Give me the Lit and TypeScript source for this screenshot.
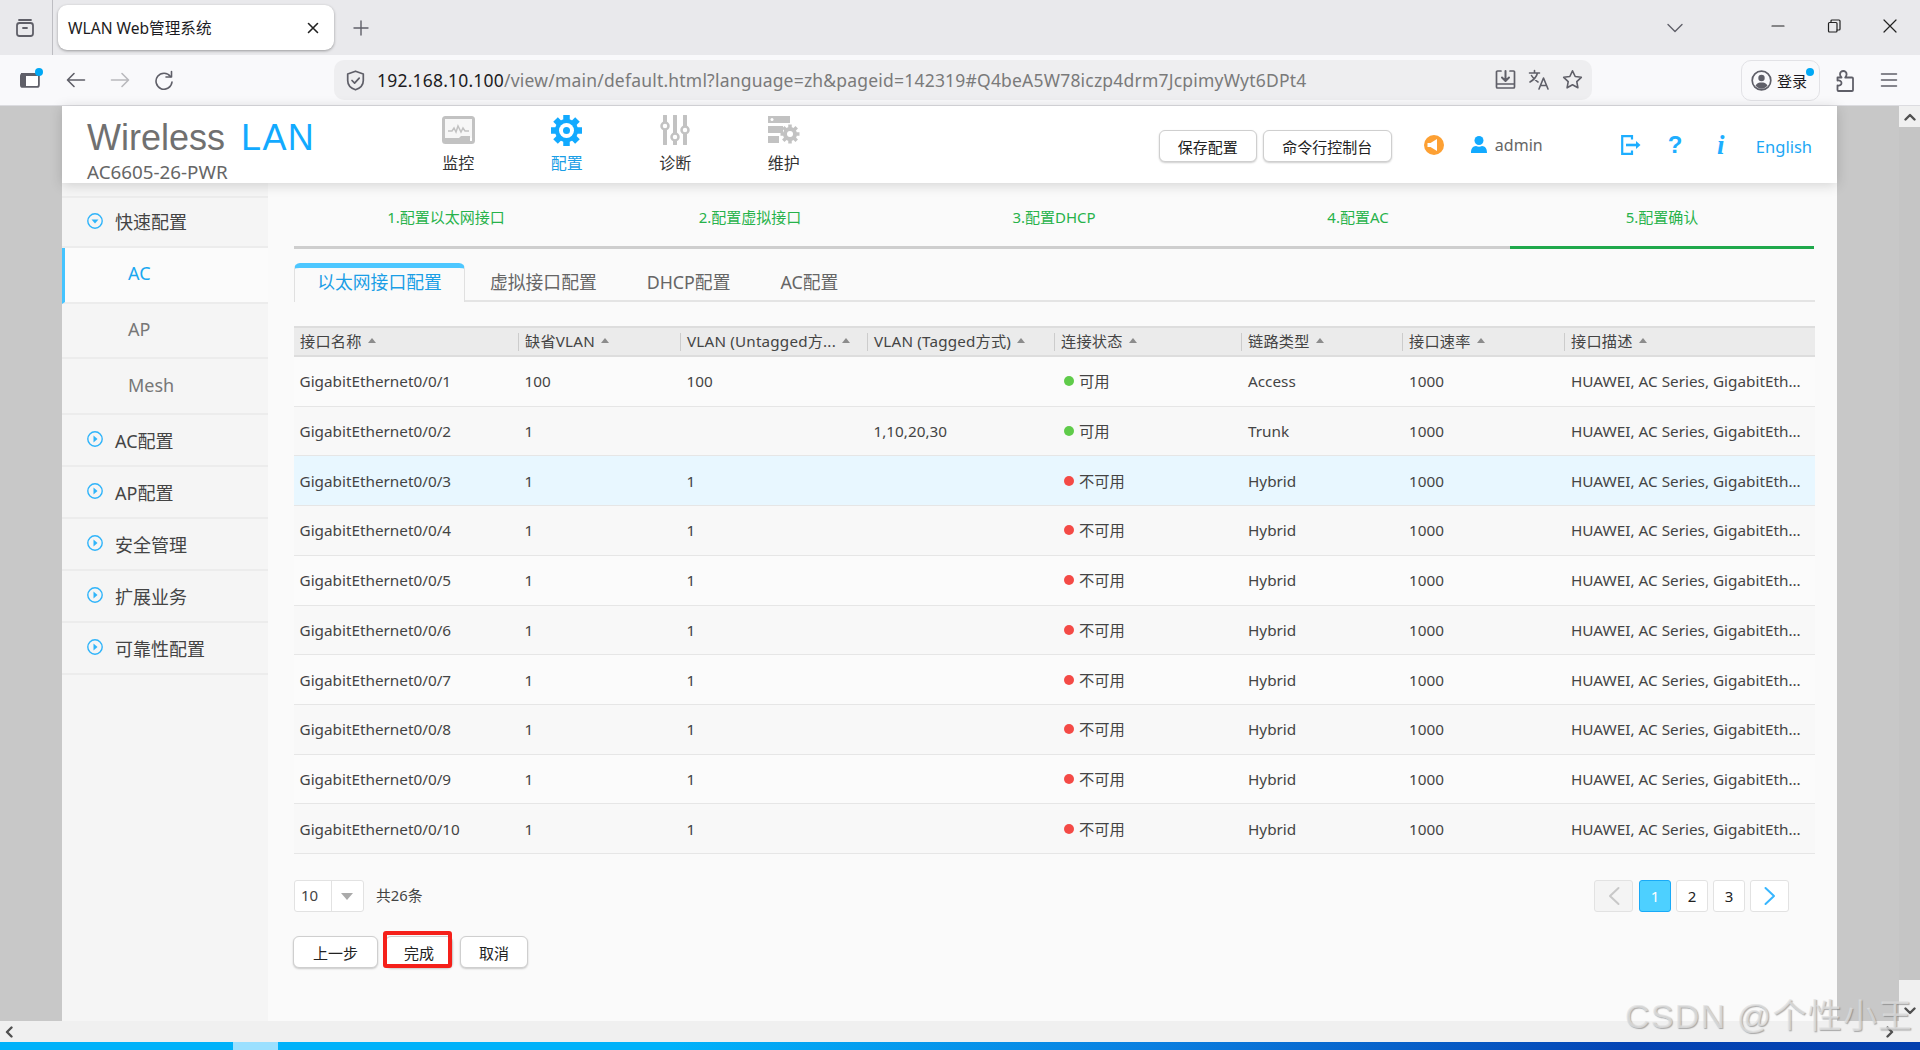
import { LitElement, html, css, svg } from "lit";
import { customElement } from "lit/decorators.js";

const stroke = (w: number, h: number, body: unknown, color = "#5f5f68", sw = 1.6) => html`<svg width=${w} height=${h} viewBox="0 0 ${w} ${h}" fill="none" stroke=${color} stroke-width=${sw} stroke-linecap="round" stroke-linejoin="round">${body}</svg>`;

const gearTeeth = (cx: number, cy: number, r: number, n: number) => {
  const out = [];
  for (let i = 0; i < n; i++) {
    const a = (i * 2 * Math.PI) / n;
    out.push(svg`<line x1=${cx} y1=${cy} x2=${cx + r * Math.cos(a)} y2=${cy + r * Math.sin(a)} />`);
  }
  return out;
};

type Row = { name: string; vlan: string; un: string; tag: string; up: boolean; link: string };
const rows: Row[] = [
  { name: "GigabitEthernet0/0/1", vlan: "100", un: "100", tag: "", up: true, link: "Access" },
  { name: "GigabitEthernet0/0/2", vlan: "1", un: "", tag: "1,10,20,30", up: true, link: "Trunk" },
  ...[3, 4, 5, 6, 7, 8, 9, 10].map((n) => ({ name: `GigabitEthernet0/0/${n}`, vlan: "1", un: "1", tag: "", up: false, link: "Hybrid" })),
];
const heads = ["接口名称", "缺省VLAN", "VLAN (Untagged方...", "VLAN (Tagged方式)", "连接状态", "链路类型", "接口速率", "接口描述"];
const sideTop = ["AC配置", "AP配置", "安全管理", "扩展业务", "可靠性配置"];
const steps = ["1.配置以太网接口", "2.配置虚拟接口", "3.配置DHCP", "4.配置AC", "5.配置确认"];

@customElement("app-root")
export class AppRoot extends LitElement {
  static styles = css`
    :host { display: flex; flex-direction: column; position: relative; width: 1920px; height: 1050px; overflow: hidden; font-family: "Noto Sans", "Noto Sans CJK SC", sans-serif; color: #444; font-size: 15px; }
    svg { display: block; flex: none; }
    .tabbar { height: 55px; flex: none; background: #e9e9ec; display: flex; align-items: center; }
    .groupslot { width: 53px; height: 55px; border-right: 1px solid #bdbdc2; display: flex; align-items: center; padding-left: 15px; box-sizing: border-box; }
    .tab { margin-left: 5px; width: 276px; height: 45px; background: #fff; border-radius: 9px; box-shadow: 0 1px 3px rgba(0,0,0,.35); display: flex; align-items: center; justify-content: space-between; padding: 0 15px 0 10px; box-sizing: border-box; font-size: 15.6px; color: #1c1b22; }
    .plus { margin-left: 19px; }
    .chev { margin-left: 1298px; }
    .winbtns { margin-left: 88px; display: flex; gap: 42px; align-items: center; padding-bottom: 4px; }
    .toolbar { height: 50px; flex: none; background: #f9f9fb; border-bottom: 1px solid #dcdce0; display: flex; align-items: center; }
    .navbtns { width: 334px; padding-left: 20px; box-sizing: border-box; display: flex; align-items: center; }
    .navbtns svg + svg { margin-left: 24px; }
    .navgap { width: 26px; flex: none; }
    .addr { width: 1258px; height: 40px; background: #eeeef0; border-radius: 10px; display: flex; align-items: center; padding: 0 9px 0 12px; box-sizing: border-box; }
    .url { margin-left: 12px; flex: 1; font-size: 17.5px; letter-spacing: .2px; color: #7a7a7a; white-space: nowrap; overflow: hidden; }
    .url b { font-weight: 400; color: #1c1b22; }
    .addr-ic { display: flex; gap: 12px; }
    .login { margin-left: 149px; position: relative; width: 79px; height: 41px; box-sizing: border-box; border: 1px solid #e2e2e6; border-radius: 10px; display: flex; align-items: center; padding-left: 9px; gap: 5px; font-size: 15px; color: #1c1b22; }
    .dot { position: absolute; width: 8px; height: 8px; border-radius: 50%; background: #00a8f5; }
    .login .dot { right: 5px; top: 7px; }
    .sideslot .dot { right: -3px; top: -4px; }
    .sideslot { position: relative; }
    .puz { margin-left: 15px; }
    .ham { margin-left: 25px; }
    .page { flex: 1; display: flex; min-height: 0; }
    .mask { background: #c8c8c8; width: 62px; flex: none; }
    .vs { width: 21px; flex: none; background: #c5c5c5; display: flex; flex-direction: column; justify-content: space-between; }
    .vb { height: 21px; background: #f0f0f0; display: flex; align-items: center; justify-content: center; }
    .vb.low { height: 41px; align-items: flex-end; padding-bottom: 6px; box-sizing: border-box; }
    .app { width: 1775px; flex: none; display: flex; flex-direction: column; background: #fafafa; }
    .hd { height: 77px; flex: none; background: #fff; box-shadow: 0 2px 12px rgba(0,0,0,.16); position: relative; z-index: 2; display: flex; align-items: center; }
    .logo { width: 342px; box-sizing: border-box; padding-left: 25px; flex: none; align-self: flex-start; }
    .wl { font-family: "Liberation Sans", sans-serif; font-size: 36px; line-height: 36px; color: #707070; white-space: nowrap; margin-top: 14px; }
    .wl span { color: #12aaff; margin-left: 16px; letter-spacing: 1.4px; }
    .model { font-size: 18.8px; line-height: 22px; color: #666; margin-top: 5px; white-space: nowrap; }
    .nav { display: flex; flex: none; align-self: flex-start; }
    .ni { width: 108.5px; display: flex; flex-direction: column; align-items: center; font-size: 16px; line-height: 20px; color: #333; gap: 7px; padding-top: 8px; }
    .ni .ic { height: 32px; display: flex; align-items: center; justify-content: center; }
    .ni.on { color: #1a9ee6; }
    .btn { box-sizing: border-box; height: 32px; background: #fff; border: 1px solid #cfcfcf; border-radius: 6px; box-shadow: 0 1px 2px rgba(0,0,0,.2); font-size: 15px; color: #222; display: flex; align-items: center; justify-content: center; flex: none; }
    .btn.save { width: 98px; }
    .btn.cmd { width: 129px; margin-left: 6px; }
    .btn.prev { width: 85px; }
    .btn.act { width: 68px; }
    .hr { flex: 1; justify-content: flex-end; padding: 3px 25px 0 0; display: flex; align-items: center; }
    .h-ic { margin-top: -3px; }
    .h-ic.a { margin-left: 32px; }
    .h-ic.b { margin-left: 27px; }
    .h-ic.c { margin-left: 58px; }
    .admin { font-size: 16px; color: #666; margin-left: 8px; width: 61px; margin-top: -3px; }
    .q, .i { color: #1eaeff; font-weight: 700; line-height: 24px; flex: none; margin-top: -3px; }
    .q { font-family: "Liberation Sans", sans-serif; font-size: 24px; margin-left: 27px; width: 13px; text-align: center; }
    .i { font-family: "Liberation Serif", serif; font-style: italic; font-size: 27px; margin-left: 34px; width: 12px; text-align: center; }
    .en { font-size: 16.5px; color: #1ca7f5; margin-left: 29px; flex: none; }
    .body { flex: 1; display: flex; min-height: 0; }
    .side { width: 206px; flex: none; background: #f5f5f5; padding-top: 13px; box-sizing: border-box; }
    .sec { height: 52px; box-sizing: border-box; border-bottom: 2px solid #ececec; display: flex; align-items: center; padding-left: 25px; gap: 12px; font-size: 18px; color: #444; }
    .sec svg { margin-top: -2px; }
    .sec.top { border-top: 2px solid #ececec; padding-bottom: 2px; }
    .sec.top svg { margin-top: 0; }
    .sub { height: 55.7px; box-sizing: border-box; border-bottom: 2px solid #ececec; display: flex; align-items: center; padding: 0 0 3px 66px; font-size: 18px; color: #777; }
    .sub.on { background: #fbfbfb; color: #1aa7f0; border-left: 3px solid #44c4ff; padding-left: 63px; }
    .main { flex: 1; padding: 0 22px 0 26px; min-width: 0; }
    .steps { display: grid; grid-template-columns: repeat(5, 1fr); height: 66px; margin-right: 1px; }
    .st { box-sizing: border-box; border-bottom: 3px solid #cecece; color: #27b24a; font-size: 15px; line-height: 20px; padding-top: 24px; text-align: center; }
    .st.on { border-bottom-color: #1fa84b; }
    .tabs { margin-top: 14px; height: 39px; display: flex; box-sizing: border-box; border-bottom: 2px solid #e4e4e4; }
    .t { padding: 6px 25px 0; font-size: 17.8px; line-height: 26px; color: #666; white-space: nowrap; }
    .t.on { box-sizing: border-box; width: 171px; height: 39px; padding: 1px 0 0; text-align: center; background: #fafafa; color: #1a9ee6; border: 1px solid #e0e0e0; border-bottom: none; border-top: 5px solid #4dc7ff; border-radius: 6px 6px 0 0; }
    .tbl { margin-top: 24px; }
    .gr { display: grid; grid-template-columns: 224px 162px 187px 187px 187px 161px 162px 1fr; }
    .th { height: 31px; box-sizing: border-box; background: #ebebeb; border-top: 2px solid #ddd; border-bottom: 2px solid #ddd; align-items: center; }
    .hc { padding: 0 0 2px 6px; box-sizing: border-box; height: 18px; line-height: 16px; font-size: 15.2px; letter-spacing: .2px; color: #444; border-left: 1px solid #ccc; display: flex; align-items: center; gap: 6px; white-space: nowrap; }
    .hc:first-child { border-left: none; }
    .tri { width: 0; height: 0; border-left: 4.5px solid transparent; border-right: 4.5px solid transparent; border-bottom: 5px solid #8c8c8c; flex: none; }
    .rows { display: grid; grid-template-rows: repeat(10, 1fr); height: 497px; }
    .r { align-items: center; border-bottom: 1px solid #e6e6e6; background: #f8f8f8; }
    .r.odd { background: #fbfbfb; }
    .r.hl { background: #e8f7ff; }
    .c { padding-left: 6.5px; color: #444; white-space: nowrap; font-size: 15.3px; line-height: 20px; }
    .c:first-child { padding-left: 5.5px; }
    .c:nth-child(n+6) { padding-left: 7px; }
    .s { display: flex; align-items: center; gap: 5px; padding-left: 10px; }
    .sd { width: 10px; height: 10px; border-radius: 50%; background: #f44a46; flex: none; }
    .sd.up { background: #5fcb4a; }
    .pg { margin-top: 26px; height: 32px; display: flex; align-items: center; }
    .sel { width: 70px; height: 32px; box-sizing: border-box; background: #fff; border: 1px solid #e2e2e2; border-radius: 3px; display: flex; align-items: center; font-size: 15px; }
    .sel span { width: 37px; padding-left: 6px; box-sizing: border-box; border-right: 1px solid #e2e2e2; height: 30px; line-height: 28px; }
    .down { margin-left: 9px; width: 0; height: 0; border-left: 6px solid transparent; border-right: 6px solid transparent; border-top: 7px solid #aaa; }
    .total { margin: -4px 0 0 12px; font-size: 14.8px; color: #444; }
    .pager { margin-left: auto; margin-right: 26px; display: flex; gap: 5px; }
    .p { box-sizing: border-box; width: 32px; height: 32px; background: #fff; border: 1px solid #e2e2e2; border-radius: 3px; display: flex; align-items: center; justify-content: center; font-size: 15px; color: #222; }
    .p.wide { width: 39px; }
    .p.off { background: #f4f4f4; margin-right: 1px; }
    .p.on { background: #4dd0ff; border-color: #19aaf8; color: #fff; }
    .acts { margin-top: 24px; display: flex; gap: 7px; position: relative; margin-left: -1px; }
    .redbox { position: absolute; left: 90px; top: -5px; width: 69px; height: 37px; box-sizing: border-box; border: 4px solid #f5201a; border-radius: 3px; }
    .hs { height: 21px; flex: none; background: #f0f0f0; display: flex; align-items: center; justify-content: space-between; padding: 0 26px 0 5px; }
    .task { height: 8px; flex: none; background: linear-gradient(90deg, #00b2fa 0, #00b2fa 35%, #0a7fe0 60%, #0444b4 85%, #0340ae 100%); display: flex; }
    .task i { margin-left: 233px; width: 45px; background: #9be0ff; }
    .wm { position: absolute; left: 1625px; top: 994px; font-family: "Liberation Sans", "Noto Sans CJK SC", sans-serif; font-size: 34px; letter-spacing: 1.2px; line-height: 44px; color: rgba(225,225,225,.75); text-shadow: 1px 1px 1px rgba(110,110,110,.55); white-space: nowrap; z-index: 5; }
  `;

  render() {
    return html`
      <div class="tabbar">
        <div class="groupslot">${stroke(20, 20, svg`<rect x="2" y="5" width="16" height="13" rx="2.5"/><path d="M4 2h12M8 10h4"/>`, "#5f5f68", 1.8)}</div>
        <div class="tab">WLAN Web管理系统${stroke(12, 12, svg`<path d="M1.5 1.5l9 9M10.5 1.5l-9 9"/>`, "#222", 1.6)}</div>
        <div class="plus">${stroke(16, 16, svg`<path d="M8 1v14M1 8h14"/>`, "#5f5f68", 1.4)}</div>
        <div class="chev">${stroke(16, 10, svg`<path d="M1 1.5l7 7 7-7"/>`, "#5f5f68", 1.4)}</div>
        <div class="winbtns">
          ${stroke(14, 14, svg`<path d="M1 7h12"/>`, "#222", 1.2)}
          ${stroke(14, 14, svg`<rect x="1.5" y="3.5" width="8.5" height="9.5" rx="1"/><path d="M4 3.5V2a1 1 0 0 1 1-1h7a1 1 0 0 1 1 1v8a1 1 0 0 1-1 1h-2"/>`, "#222", 1.2)}
          ${stroke(14, 14, svg`<path d="M1 1l12 12M13 1L1 13"/>`, "#222", 1.2)}
        </div>
      </div>
      <div class="toolbar">
        <div class="navbtns">
          <div class="sideslot">
            ${html`<svg width="20" height="16" viewBox="0 0 20 16"><rect x="0.9" y="1.9" width="18" height="13" rx="2" fill="#fff" stroke="#5f5f68" stroke-width="1.8"/><path d="M1 3a2 2 0 0 1 2-2h3v14H3a2 2 0 0 1-2-2z" fill="#5f5f68"/><path d="M1 1h18v3H1z" fill="#5f5f68"/></svg>`}
            <span class="dot"></span>
          </div>
          <div class="navgap"></div>
          ${stroke(20, 16, svg`<path d="M18.5 8H2M8 1.5L1.5 8 8 14.5"/>`, "#5f5f68", 1.6)}
          ${stroke(20, 16, svg`<path d="M1.5 8H18M12 1.5L18.5 8 12 14.5"/>`, "#b9b9bd", 1.6)}
          ${stroke(20, 20, svg`<path d="M16.5 6.5A8 8 0 1 0 18 12"/><path d="M17.5 1.5v5.5h-5.5"/>`, "#5f5f68", 1.6)}
        </div>
        <div class="addr">
          ${stroke(19, 21, svg`<path d="M9.5 1.2l7.8 2.8v6.5c0 4.6-3.3 7.8-7.8 9.3-4.5-1.5-7.8-4.7-7.8-9.3V4z"/><path d="M6 10.5l2.6 2.6 4.6-5"/>`, "#5f5f68", 1.7)}
          <div class="url"><b>192.168.10.100</b>/view/main/default.html?language=zh&amp;pageid=142319#Q4beA5W78iczp4drm7JcpimyWyt6DPt4</div>
          <div class="addr-ic">
            ${stroke(21, 21, svg`<path d="M6 2H2.5a1 1 0 0 0-1 1v15a1 1 0 0 0 1 1h16a1 1 0 0 0 1-1V3a1 1 0 0 0-1-1H15M1.5 15h18"/><path d="M10.5 2v8M7 8.5l3.5 3.5L14 8.5" stroke-width="2"/>`, "#5f5f68", 1.7)}
            ${stroke(22, 22, svg`<path d="M1.5 4h10M6.5 1.5V4M9.5 4c-1 4-4 7-7.5 9M3.5 6.5c1.5 3 4 5 6.5 6.5"/><path d="M11 20l4.5-11 4.5 11M12.5 16.5h6"/>`, "#5f5f68", 1.6)}
            ${stroke(21, 21, svg`<path d="M10.5 1.8l2.7 5.7 6.1.8-4.5 4.3 1.1 6.2-5.4-3-5.4 3 1.1-6.2-4.5-4.3 6.1-.8z"/>`, "#5f5f68", 1.6)}
          </div>
        </div>
        <div class="login">
          ${html`<svg width="21" height="21" viewBox="0 0 21 21" fill="none"><circle cx="10.5" cy="10.5" r="9.3" stroke="#5f5f68" stroke-width="1.7"/><circle cx="10.5" cy="8" r="3.2" fill="#5f5f68"/><path d="M4.5 15.5c1.5-2.5 3.5-3 6-3s4.5.5 6 3c-1.5 2-3.5 3.2-6 3.2s-4.5-1.2-6-3.2z" fill="#5f5f68"/></svg>`}
          登录<span class="dot"></span>
        </div>
        <div class="puz">${stroke(20, 24, svg`<path d="M2.5 9.5h4c-1-1-1.5-2-1.5-3.200a3.300 3.300 0 0 1 6.600 0c0 1.200-.5 2.200-1.400 3.200h6.800a1 1 0 0 1 1 1v11.500a1 1 0 0 1-1 1H3.500a1 1 0 0 1-1-1v-4.500c2.500.5 4-.7 4-2.500s-1.500-3-4-2.500z"/>`, "#5f5f68", 1.8)}</div>
        <div class="ham">${stroke(18, 16, svg`<path d="M1.5 2h15M1.5 8h15M1.5 14h15"/>`, "#5f5f68", 1.5)}</div>
      </div>
      <div class="page">
        <div class="mask"></div>
        <div class="app">
          <div class="hd">
            <div class="logo">
              <div class="wl">Wireless<span>LAN</span></div>
              <div class="model">AC6605-26-PWR</div>
            </div>
            <div class="nav">
              <div class="ni"><div class="ic">
                <svg width="33" height="28" viewBox="0 0 33 28" fill="none"><rect x="1.5" y="1.5" width="30" height="25" rx="2" stroke="#c2c2c2" stroke-width="3"/><rect x="3" y="3" width="27" height="19" fill="#f7f7f7"/><path d="M6 15h4l2-3 2 4 2-6 3 6 2-4 2 3h4" stroke="#c2c2c2" stroke-width="1.5"/><path d="M3 22h14l2-2h9v5H3z" fill="#c2c2c2"/></svg>
              </div>监控</div>
              <div class="ni on"><div class="ic">
                <svg width="33" height="33" viewBox="0 0 33 33" fill="none"><g stroke="#12aaff" stroke-width="6.5">${gearTeeth(16.5, 16.5, 15.5, 8)}</g><circle cx="16.5" cy="16.5" r="11.5" fill="#12aaff"/><circle cx="16.5" cy="16.5" r="7.5" fill="#fff"/><circle cx="16.5" cy="16.5" r="3.5" fill="#12aaff"/></svg>
              </div>配置</div>
              <div class="ni"><div class="ic">
                <svg width="30" height="30" viewBox="0 0 30 30" fill="none" stroke="#c2c2c2"><path d="M5 1v28M15 1v28M25 1v28" stroke-width="4" stroke-linecap="round"/><g fill="#fff" stroke-width="2.5"><circle cx="5" cy="11" r="3.5"/><circle cx="15" cy="22" r="3.5"/><circle cx="25" cy="15" r="3.5"/></g></svg>
              </div>诊断</div>
              <div class="ni"><div class="ic">
                <svg width="33" height="30" viewBox="0 0 33 30" fill="none"><path d="M1 1h22v7H1zM1 11h15v7H1zM1 21h11v7H1z" fill="#c2c2c2"/><circle cx="5" cy="4.5" r="1.5" fill="#fff"/><g stroke="#c2c2c2" stroke-width="3.5">${gearTeeth(23, 19, 9.5, 8)}</g><circle cx="23" cy="19" r="7" fill="#c2c2c2"/><circle cx="23" cy="19" r="3" fill="#fff"/></svg>
              </div>维护</div>
            </div>
            <div class="hr">
              <div class="btn save">保存配置</div>
              <div class="btn cmd">命令行控制台</div>
              <svg class="h-ic a" width="20" height="20" viewBox="0 0 20 20"><circle cx="10" cy="10" r="10" fill="#fda033"/><path d="M3.5 8h3L13 4v12l-6.5-4h-3z" fill="#fff"/></svg>
              <svg class="h-ic b" width="16" height="17" viewBox="0 0 16 17"><circle cx="8" cy="4.5" r="4.5" fill="#12aaff"/><path d="M0 17c0-5 2-6.5 5-7 2 1 4 1 6 0 3 .5 5 2 5 7z" fill="#12aaff"/></svg>
              <div class="admin">admin</div>
              <svg class="h-ic c" width="20" height="20" viewBox="0 0 20 20" fill="none" stroke="#1eaeff" stroke-width="2.2"><path d="M11 4.500V1.200H1.200v17.600H11v-3.300"/><path d="M5 10h11" stroke-width="2.6"/><path d="M15 6l4.500 4-4.500 4z" fill="#1eaeff" stroke="none"/></svg>
              <div class="q">?</div>
              <div class="i">i</div>
              <div class="en">English</div>
            </div>
          </div>
          <div class="body">
            <div class="side">
              <div class="sec top">${this.arrow(true)}快速配置</div>
              <div class="sub on">AC</div>
              <div class="sub">AP</div>
              <div class="sub">Mesh</div>
              ${sideTop.map((s) => html`<div class="sec">${this.arrow(false)}${s}</div>`)}
            </div>
            <div class="main">
              <div class="steps">${steps.map((s, i) => html`<div class="st ${i === 4 ? "on" : ""}">${s}</div>`)}</div>
              <div class="tabs">
                <div class="t on">以太网接口配置</div>
                <div class="t">虚拟接口配置</div>
                <div class="t">DHCP配置</div>
                <div class="t">AC配置</div>
              </div>
              <div class="tbl">
                <div class="gr th">${heads.map((h) => html`<div class="hc">${h}<span class="tri"></span></div>`)}</div>
                <div class="rows">
                  ${rows.map((r, i) => html`<div class="gr r ${i % 2 === 0 ? "odd" : ""} ${i === 2 ? "hl" : ""}">
                    <div class="c">${r.name}</div>
                    <div class="c">${r.vlan}</div>
                    <div class="c">${r.un}</div>
                    <div class="c">${r.tag}</div>
                    <div class="c s"><span class="sd ${r.up ? "up" : ""}"></span>${r.up ? "可用" : "不可用"}</div>
                    <div class="c">${r.link}</div>
                    <div class="c">1000</div>
                    <div class="c">HUAWEI, AC Series, GigabitEth...</div>
                  </div>`)}
                </div>
              </div>
              <div class="pg">
                <div class="sel"><span>10</span><i class="down"></i></div>
                <div class="total">共26条</div>
                <div class="pager">
                  <div class="p wide off">${stroke(12, 20, svg`<path d="M10.5 2L2 10l8.5 8"/>`, "#c8c8c8", 2)}</div>
                  <div class="p on">1</div>
                  <div class="p">2</div>
                  <div class="p">3</div>
                  <div class="p wide">${stroke(12, 20, svg`<path d="M1.5 2L10 10l-8.5 8"/>`, "#38b6ff", 2)}</div>
                </div>
              </div>
              <div class="acts">
                <div class="btn prev">上一步</div>
                <div class="btn act">完成</div>
                <div class="btn act">取消</div>
                <div class="redbox"></div>
              </div>
            </div>
          </div>
        </div>
        <div class="mask"></div>
        <div class="vs">
          <div class="vb">${stroke(12, 8, svg`<path d="M1.5 6.5L6 2l4.5 4.5"/>`, "#505050", 2.4)}</div>
          <div class="vb low">${stroke(12, 8, svg`<path d="M1.5 1.5L6 6l4.5-4.5"/>`, "#505050", 2.4)}</div>
        </div>
      </div>
      <div class="hs">
        ${stroke(8, 12, svg`<path d="M6.5 1.5L2 6l4.5 4.5"/>`, "#505050", 2.4)}
        ${stroke(8, 12, svg`<path d="M1.5 1.5L6 6l-4.5 4.5"/>`, "#505050", 2.4)}
      </div>
      <div class="task"><i></i></div>
      <div class="wm">CSDN @个性小王</div>
    `;
  }

  arrow(open: boolean) {
    return html`<svg width="16" height="16" viewBox="0 0 16 16" fill="none"><circle cx="8" cy="8" r="7.2" stroke="#2fb4fa" stroke-width="1.4"/>${open
      ? svg`<path d="M4.5 6.5h7L8 10.5z" fill="#2fb4fa"/>`
      : svg`<path d="M6.5 4.5v7l4-3.5z" fill="#2fb4fa"/>`}</svg>`;
  }
}
